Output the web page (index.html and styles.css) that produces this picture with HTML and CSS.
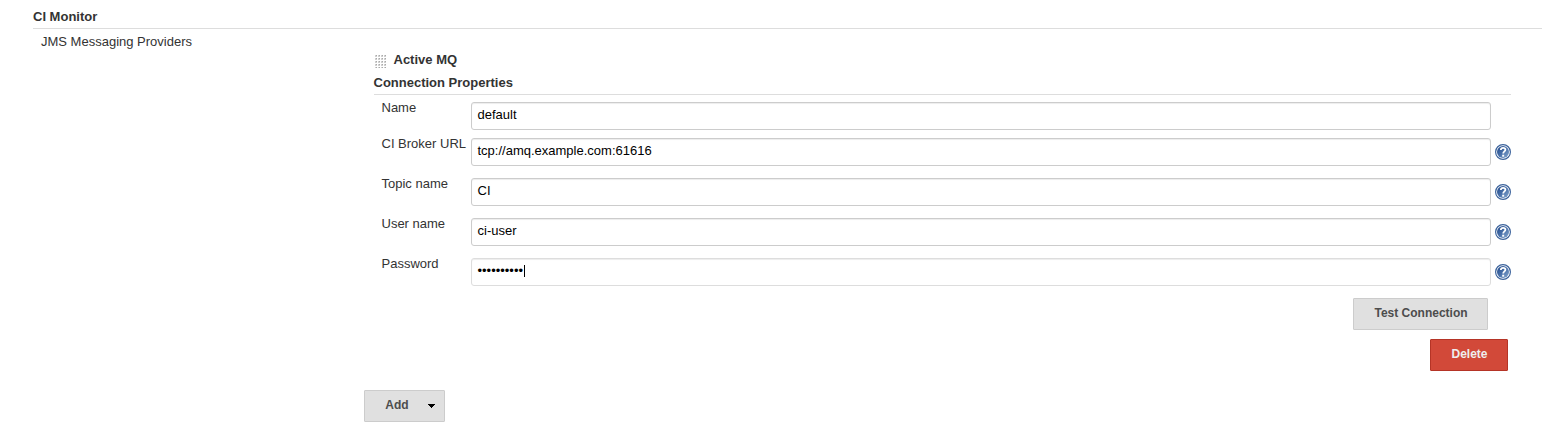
FILE: index.html
```html
<!DOCTYPE html>
<html lang="en">
<head>
<meta charset="utf-8">
<title>CI Monitor</title>
<link rel="stylesheet" href="styles.css">
</head>
<body>
<svg class="defs" width="0" height="0">
  <defs>
    <linearGradient id="blue" x1="0" y1="0" x2="1" y2="1">
      <stop offset="0" stop-color="#1f4788"/><stop offset=".5" stop-color="#4870aa"/><stop offset="1" stop-color="#89a9cf"/>
    </linearGradient>
    <symbol id="help" viewBox="0 0 16 16">
      <circle cx="8" cy="8" r="7.4" fill="#fff" stroke="#3c639c" stroke-width="1.2"/>
      <circle cx="8" cy="8" r="6" fill="url(#blue)"/>
      <path d="M5.8 6C5.9 4.5 6.8 3.8 8.1 3.8c1.4 0 2.3.8 2.3 1.9C10.4 7.4 8.2 7.5 8.2 9.6" fill="none" stroke="#fff" stroke-width="1.8"/>
      <rect x="7.2" y="10.7" width="2" height="2" fill="#fff"/>
    </symbol>
  </defs>
</svg>
<main class="section">
  <h1 class="heading">CI Monitor</h1>
  <div class="columns">
    <div class="setting">JMS Messaging Providers</div>
    <div class="providers">
      <div class="provider">
        <div class="drag-row"><svg class="handle" width="12" height="13"><defs><pattern id="dots" width="3" height="3" patternUnits="userSpaceOnUse"><rect width="2" height="2" fill="#d0d0d0"/><rect x="1" width="1" height="1" fill="#aaa"/></pattern></defs><rect width="12" height="13" fill="url(#dots)"/></svg><b>Active MQ</b></div>
        <h2 class="heading">Connection Properties</h2>
        <div class="row row-first"><label class="label">Name</label><div class="input">default</div></div>
        <div class="row"><label class="label">CI Broker URL</label><div class="input">tcp://amq.example.com:61616</div><svg class="help"><use href="#help"/></svg></div>
        <div class="row"><label class="label">Topic name</label><div class="input">CI</div><svg class="help"><use href="#help"/></svg></div>
        <div class="row"><label class="label">User name</label><div class="input">ci-user</div><svg class="help"><use href="#help"/></svg></div>
        <div class="row"><label class="label">Password</label><div class="input input-focus">••••••••••<span class="caret"></span></div><svg class="help"><use href="#help"/></svg></div>
        <div class="actions actions-test"><button class="button button-test">Test Connection</button></div>
        <div class="actions actions-delete"><button class="button button-delete">Delete</button></div>
      </div>
      <button class="button button-add"><span class="add-text">Add</span><svg class="arrow" width="7" height="4" viewBox="0 0 7 4" shape-rendering="crispEdges"><path d="M0 0h7v1h-1v1h-1v1h-1v1h-1v-1h-1v-1h-1v-1h-1z"/></svg></button>
    </div>
  </div>
</main>
</body>
</html>
```
FILE: styles.css
```css
* { box-sizing: border-box; }
body {
  margin: 0;
  background: #fff;
  color: #333;
  font: 13px/16px "Liberation Sans", Arial, sans-serif;
}
.defs { display: block; height: 0; }
.section { padding: 9px 8px 0 33px; }
.heading {
  margin: 0;
  height: 20px;
  border-bottom: 1px solid #ddd;
  font-size: 13px;
  line-height: 16px;
}
.columns { display: flex; padding-top: 5px; }
.setting { width: 331px; padding-left: 8px; flex: none; }
.providers { flex: 1; padding-top: 18px; }
.provider { width: 1147px; padding-left: 9.5px; }
.drag-row { display: flex; height: 23px; }
.handle { margin: 3px 6.5px 0 1.5px; }
.row {
  display: flex;
  align-items: flex-start;
  height: 40px;
  padding: 3px 0 0 8px;
}
.row-first { height: 40px; padding-top: 7px; }
.label { width: 89.5px; flex: none; margin-top: -2px; }
.input {
  width: 1020px;
  flex: none;
  height: 28px;
  padding: 4px 6px 0 5.5px;
  border: 1px solid #ccc;
  border-radius: 3px;
  box-shadow: inset 0 1px 1px rgba(0, 0, 0, .075);
  color: #000;
}
.input-focus { display: flex; border-color: #ddd; }
.caret { width: 1px; height: 12px; margin: 2px 0 0 1px; background: #000; }
.help { width: 16px; height: 16px; margin: 6px 0 0 4px; flex: none; }
.actions { display: flex; justify-content: flex-end; }
.actions-test { padding: 3px 23px 9px 0; }
.actions-delete { padding: 0 3px 19px 0; }
.button {
  height: 32px;
  padding: 0 0 2px;
  border: 1px solid #ccc;
  border-radius: 1px;
  background: #e0e0e0;
  color: #4d4d4d;
  font: bold 12px/15px "Liberation Sans", Arial, sans-serif;
}
.button-test { width: 135px; padding-left: 1px; }
.button-delete { width: 78px; padding-left: 1px; background: #d24939; border-color: #b53426; color: #eee; }
.button-add { display: flex; align-items: center; width: 81px; padding-left: 20.3px; }
.add-text { width: 42.7px; text-align: left; }
.arrow { margin-top: 2px; }
```
